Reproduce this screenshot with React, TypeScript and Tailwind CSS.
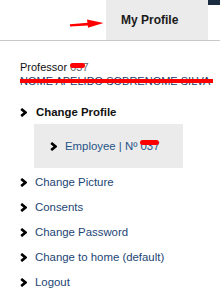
import React from 'react';

function Chevron() {
  return (
    <svg width="7" height="9" viewBox="0 0 7 9" className="shrink-0">
      <polyline points="1.2,0.9 5.5,4.5 1.2,8.1" fill="none" stroke="#000" strokeWidth="2.6" strokeLinecap="butt" strokeLinejoin="miter" />
    </svg>
  );
}

function Redacted({ children, className }: { children: React.ReactNode; className: string }) {
  return (
    <span className="relative">
      {children}
      <span className={`absolute bg-[#ff0000] rounded-[3px] ${className}`} />
    </span>
  );
}

const menu = ['Change Picture', 'Consents', 'Change Password', 'Change to home (default)', 'Logout'];

export default function App() {
  return (
    <div className="w-[220px] h-[298px] bg-white overflow-hidden font-['Liberation_Sans',Arial,sans-serif]">
      {/* Header with active tab */}
      <div className="h-[41px] border-b border-[#c9c9c9] flex items-start">
        <svg width="36" height="12" viewBox="0 0 36 12" className="ml-[69px] mt-[18px] shrink-0">
          <path d="M1 6.2 L19 4.8 L19 7.6 L1 8.6 Z" fill="#ff0000" />
          <path d="M18 1.5 L34.5 5 L19 9.8 Z" fill="#ff0000" />
        </svg>
        <div className="ml-[1px] w-[102px] h-full bg-[#ebebeb] flex items-center pl-[15px]">
          <span className="text-[12px] font-bold text-[#1a1a1a]">My Profile</span>
        </div>
        <div className="w-[12px] h-[5px] bg-[#1c2d42]" />
      </div>

      <div className="pl-[20px] pt-[19px]">
        <div className="h-[14px] leading-[14px] text-[11px] text-[#111]">
          Professor <Redacted className="left-0 top-[2px] w-[15px] h-[5px]"><span className="text-[#666]">037</span></Redacted>
        </div>
        <div className="relative h-[14px] w-[193px] leading-[14px] text-[11px] text-[#1d3a66] whitespace-nowrap">
          NOME APELIDO SOBRENOME SILVA
          <span className="absolute left-0 top-[5px] w-[193px] h-[4px] bg-[#ff0000]" />
        </div>

        <div className="mt-[17px] h-[14px] flex items-center gap-[9px]">
          <Chevron />
          <span className="text-[11.4px] leading-[14px] font-bold text-[#111]">Change Profile</span>
        </div>

        <div className="mt-[5px] ml-[14px] w-[149px] h-[44px] bg-[#ebebeb] flex items-center pl-[16px] gap-[8px]">
          <Chevron />
          <span className="text-[11.4px] leading-[14px] text-[#1f5488] whitespace-nowrap">
            Employee | Nº <Redacted className="left-[-1px] top-[0px] w-[19px] h-[5px]">037</Redacted>
          </span>
        </div>

        <div className="mt-[7px] flex flex-col gap-[11px]">
          {menu.map((item) => (
            <div key={item} className="h-[14px] flex items-center gap-[8px]">
              <Chevron />
              <span className="text-[11.4px] leading-[14px] text-[#1b4575] whitespace-nowrap">{item}</span>
            </div>
          ))}
        </div>
      </div>
    </div>
  );
}
